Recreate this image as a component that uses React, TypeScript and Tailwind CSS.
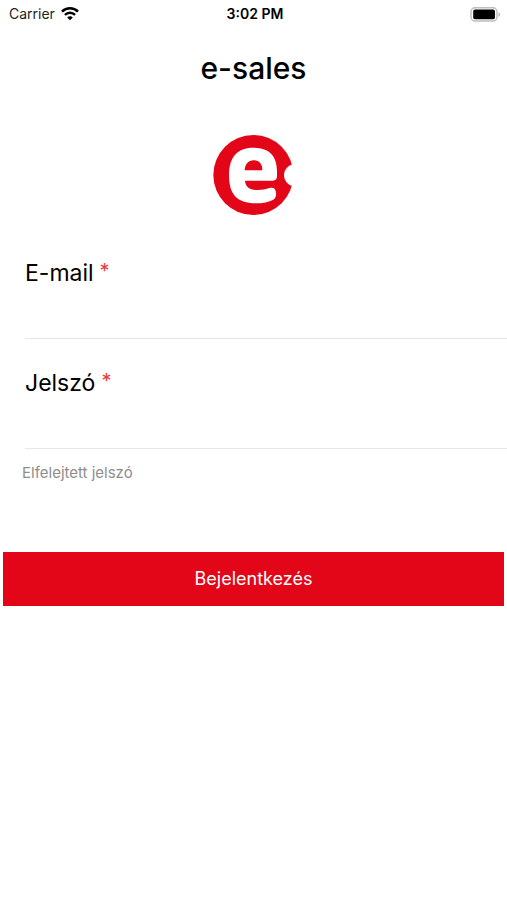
import React from 'react';

interface FieldProps {
  id: string;
  label: string;
  type: string;
}

const WifiIcon = () => (
  <svg width="18" height="14" viewBox="0 0 18 14" fill="none" aria-hidden="true">
    <path d="M1 4.6C5.4 0.2 12.6 0.2 17 4.6" stroke="#000" strokeWidth="2.6" />
    <path d="M3.9 7.9C6.8 5 11.2 5 14.1 7.9" stroke="#000" strokeWidth="2.3" />
    <path d="M9 13.2L6.2 10.4C7.8 8.9 10.2 8.9 11.8 10.4Z" fill="#000" />
  </svg>
);

const BatteryIcon = () => (
  <svg width="31" height="15" viewBox="0 0 31 15" fill="none" aria-hidden="true">
    <rect x="1" y="0.8" width="26" height="13.2" rx="4" stroke="#bdbdbd" strokeWidth="1.4" />
    <rect x="3.2" y="2.6" width="21.8" height="9.6" rx="1.8" fill="#000" />
    <path d="M28.5 5.2C30.6 6 30.6 9 28.5 9.8Z" fill="#b4b4b4" />
  </svg>
);

const Logo = () => (
  <svg className="w-[82px] h-20" viewBox="30 30 246 240" role="img" aria-label="e-sales">
    <circle cx="151" cy="150" r="120" fill="#e30618" />
    <circle cx="276" cy="151" r="33" fill="#fff" />
    <path
      fill="#fff"
      d="M151 68C103 68 78 96 78 151C78 208 102 235 158 235C179 235 198 231 211 224C219 219 221 208 218 198C216 189 209 186 200 189C188 193 178 195 164 195C140 195 128 187 126 167H209C218 167 222 162 222 153V139C222 93 199 68 151 68Z"
    />
    <path fill="#e30618" d="M125 136C126 117 136 106 152 106C169 106 178 117 178 136Z" />
  </svg>
);

const Field: React.FC<FieldProps> = ({ id, label, type }) => (
  <div className="ml-[25px] border-b border-[#e6e6e6]">
    <label htmlFor={id} className="flex items-start gap-1.5 text-[23px] leading-8 text-black">
      {label}
      <span className="text-xl leading-7 text-[#f03a3a]">*</span>
    </label>
    <input id={id} type={type} required className="block w-full h-[49px] text-xl outline-none bg-transparent" />
  </div>
);

const App = () => {
  return (
    <div className="min-h-screen bg-white text-black font-['Inter','Liberation_Sans',sans-serif]">
      <header className="grid grid-cols-3 items-center h-7 pl-[9px] pr-1.5 text-sm">
        <div className="flex items-center gap-1.5 text-[#222]">
          Carrier
          <WifiIcon />
        </div>
        <span className="text-center font-semibold">3:02 PM</span>
        <div className="flex justify-end">
          <BatteryIcon />
        </div>
      </header>

      <main>
        <h1 className="mt-5 text-center text-3xl leading-10 font-medium">e-sales</h1>
        <div className="mt-[47px] flex justify-center">
          <Logo />
        </div>

        <form className="mt-[42px]" onSubmit={(e) => e.preventDefault()}>
          <div className="space-y-7">
            <Field id="email" label="E-mail" type="email" />
            <Field id="password" label="Jelszó" type="password" />
          </div>
          <a href="#" className="block w-fit ml-[22px] mt-[14px] text-[15px] leading-5 text-[#8e8e8e]">
            Elfelejtett jelszó
          </a>
          <div className="mt-[69px] px-[3px]">
            <button type="submit" className="block w-full h-[54px] bg-[#e30618] text-white text-lg">
              Bejelentkezés
            </button>
          </div>
        </form>
      </main>
    </div>
  );
};

export default App;
